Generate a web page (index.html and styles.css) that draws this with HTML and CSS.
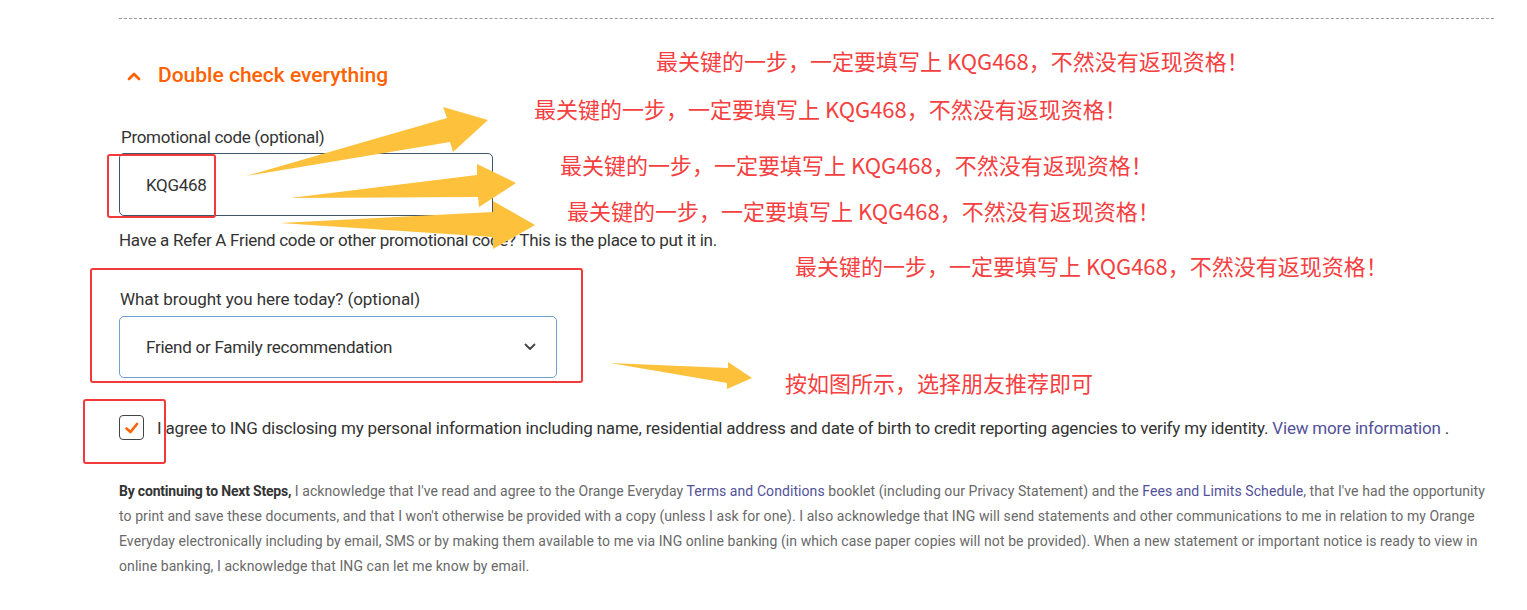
FILE: index.html
```html
<!DOCTYPE html>
<html lang="en">
<head>
<meta charset="utf-8">
<title>Double check everything</title>
<link rel="stylesheet" href="styles.css">
</head>
<body>
<div class="page">
  <div class="divider"></div>

  <section class="section">
    <h2 class="section-title">
      <svg class="chev-up" width="14" height="10" viewBox="0 0 14 10"><path d="M2 8 L7 3 L12 8" fill="none" stroke="#ff6200" stroke-width="2.8" stroke-linecap="round" stroke-linejoin="round"/></svg>
      <span>Double check everything</span>
    </h2>

    <div class="field promo">
      <label class="label">Promotional code (optional)</label>
      <div class="input">KQG468</div>
      <p class="help">Have a Refer A Friend code or other promotional code? This is the place to put it in.</p>
    </div>

    <div class="field source">
      <label class="label">What brought you here today? (optional)</label>
      <div class="select">
        <span>Friend or Family recommendation</span>
        <svg class="chev-down" width="12" height="8" viewBox="0 0 12 8"><path d="M1.5 1.5 L6 6 L10.5 1.5" fill="none" stroke="#444" stroke-width="1.8" stroke-linecap="round" stroke-linejoin="round"/></svg>
      </div>
    </div>

    <div class="consent">
      <span class="checkbox">
        <svg width="24" height="24" viewBox="0 0 24 24"><path d="M6.5 12.5 L10.5 16 L17 8" fill="none" stroke="#ff6200" stroke-width="2.6" stroke-linecap="round" stroke-linejoin="round"/></svg>
      </span>
      <p class="consent-text">I agree to ING disclosing my personal information including name, residential address and date of birth to credit reporting agencies to verify my identity. <a class="link">View more information</a> .</p>
    </div>

    <p class="legal"><strong>By continuing to Next Steps,</strong> I acknowledge that I've read and agree to the Orange Everyday <a class="link">Terms and Conditions</a> booklet (including our Privacy Statement) and the <a class="link">Fees and Limits Schedule</a>, that I've had the opportunity to print and save these documents, and that I won't otherwise be provided with a copy (unless I ask for one). I also acknowledge that ING will send statements and other communications to me in relation to my Orange Everyday electronically including by email, SMS or by making them available to me via ING online banking (in which case paper copies will not be provided). When a new statement or important notice is ready to view in online banking, I acknowledge that ING can let me know by email.</p>
  </section>
</div>

<div class="annotations">
  <div class="mark mark-promo"></div>
  <div class="mark mark-source"></div>
  <div class="mark mark-check"></div>

  <p class="note note-1">最关键的一步，一定要填写上 KQG468，不然没有返现资格！</p>
  <p class="note note-2">最关键的一步，一定要填写上 KQG468，不然没有返现资格！</p>
  <p class="note note-3">最关键的一步，一定要填写上 KQG468，不然没有返现资格！</p>
  <p class="note note-4">最关键的一步，一定要填写上 KQG468，不然没有返现资格！</p>
  <p class="note note-5">最关键的一步，一定要填写上 KQG468，不然没有返现资格！</p>
  <p class="note note-6">按如图所示，选择朋友推荐即可</p>

  <svg class="arrows" width="1527" height="610" viewBox="0 0 1527 610">
    <polygon points="246,176 447,118 443,107 488,120 453,152 450,142"/>
    <polygon points="290,198 477,175 477,164 516,183 479,207 478,197"/>
    <polygon points="280,223 493,212 493,201 535,225 493,249 493,237"/>
    <polygon points="610,363 728,368 728,362 752,378 727,389 727,383"/>
  </svg>
</div>
</body>
</html>
```

FILE: styles.css
```css
* { box-sizing: border-box; }

html, body {
  margin: 0;
  padding: 0;
  background: #ffffff;
}

body {
  position: relative;
  width: 1527px;
  height: 610px;
  overflow: hidden;
  font-family: "Roboto", "Liberation Sans", sans-serif;
  color: #333333;
}

.page {
  padding: 18px 33px 0 119px;
}

.divider {
  border-top: 1px dashed #9a9a9a;
  width: 1375px;
}

.section-title {
  display: flex;
  align-items: center;
  gap: 17px;
  margin: 42px 0 0 8px;
  font-size: 21px;
  font-weight: 500;
  color: #ff6200;
  line-height: 28px;
  letter-spacing: 0;
}

.chev-up { display: block; margin-top: 1px; }

.field { display: flex; flex-direction: column; align-items: flex-start; }

.label {
  display: block;
  font-size: 17px;
  line-height: 22px;
  color: #333333;
  letter-spacing: -0.15px;
  margin-left: 2px;
}

.promo { margin-top: 37px; }
.promo .label { letter-spacing: -0.3px; }

.input {
  margin-top: 5px;
  width: 374px;
  height: 63px;
  border: 1px solid #3f556b;
  border-radius: 5px;
  padding: 0 0 0 26px;
  display: flex;
  align-items: center;
  font-size: 17px;
  color: #333333;
  letter-spacing: -0.3px;
}

.help {
  margin: 13px 0 0 0;
  font-size: 17px;
  line-height: 22px;
  color: #333333;
  letter-spacing: -0.3px;
}

.source { margin-top: 37px; }
.source .label { margin-left: 1px; letter-spacing: -0.05px; }

.select {
  margin-top: 6px;
  width: 438px;
  height: 62px;
  border: 1px solid #6f9fd3;
  border-radius: 5px;
  padding: 0 20px 0 26px;
  display: flex;
  align-items: center;
  justify-content: space-between;
  font-size: 17px;
  color: #333333;
  letter-spacing: -0.25px;
}

.consent {
  display: flex;
  align-items: center;
  gap: 13px;
  margin-top: 37px;
}

.checkbox {
  display: block;
  flex: none;
  width: 25px;
  height: 25px;
  border: 1px solid #444444;
  border-radius: 4px;
  position: relative;
}

.checkbox svg { display: block; margin: -0.5px; }

.consent-text {
  margin: 0;
  font-size: 17px;
  line-height: 24px;
  color: #333333;
  letter-spacing: -0.18px;
}

.link { color: #525199; text-decoration: none; }

.legal {
  margin: 39px 0 0 0;
  width: 1375px;
  font-size: 14px;
  line-height: 25px;
  color: #696969;
  letter-spacing: 0.08px;
}

.legal strong { color: #333333; font-weight: 700; letter-spacing: -0.2px; }

/* annotation overlay */
.annotations {
  position: absolute;
  left: 0;
  top: 0;
  width: 1527px;
  height: 610px;
  pointer-events: none;
}

.mark {
  position: absolute;
  border: 2px solid #f23a3a;
  border-radius: 3px;
}
.mark-promo  { left: 107px; top: 154px; width: 109px; height: 64px; }
.mark-source { left: 90px;  top: 268px; width: 493px; height: 115px; }
.mark-check  { left: 83px;  top: 399px; width: 83px;  height: 65px; }

.note {
  position: absolute;
  margin: 0;
  font-family: "Noto Sans CJK SC", "Noto Sans", sans-serif;
  font-size: 22px;
  line-height: 28px;
  color: #f5403f;
  white-space: nowrap;
}
.note-1 { left: 656px; top: 46px; }
.note-2 { left: 534px; top: 94px; }
.note-3 { left: 560px; top: 150px; }
.note-4 { left: 567px; top: 196px; }
.note-5 { left: 795px; top: 251px; }
.note-6 { left: 785px; top: 368px; }

.arrows {
  position: absolute;
  left: 0;
  top: 0;
}
.arrows polygon { fill: #fdc13c; }
```
